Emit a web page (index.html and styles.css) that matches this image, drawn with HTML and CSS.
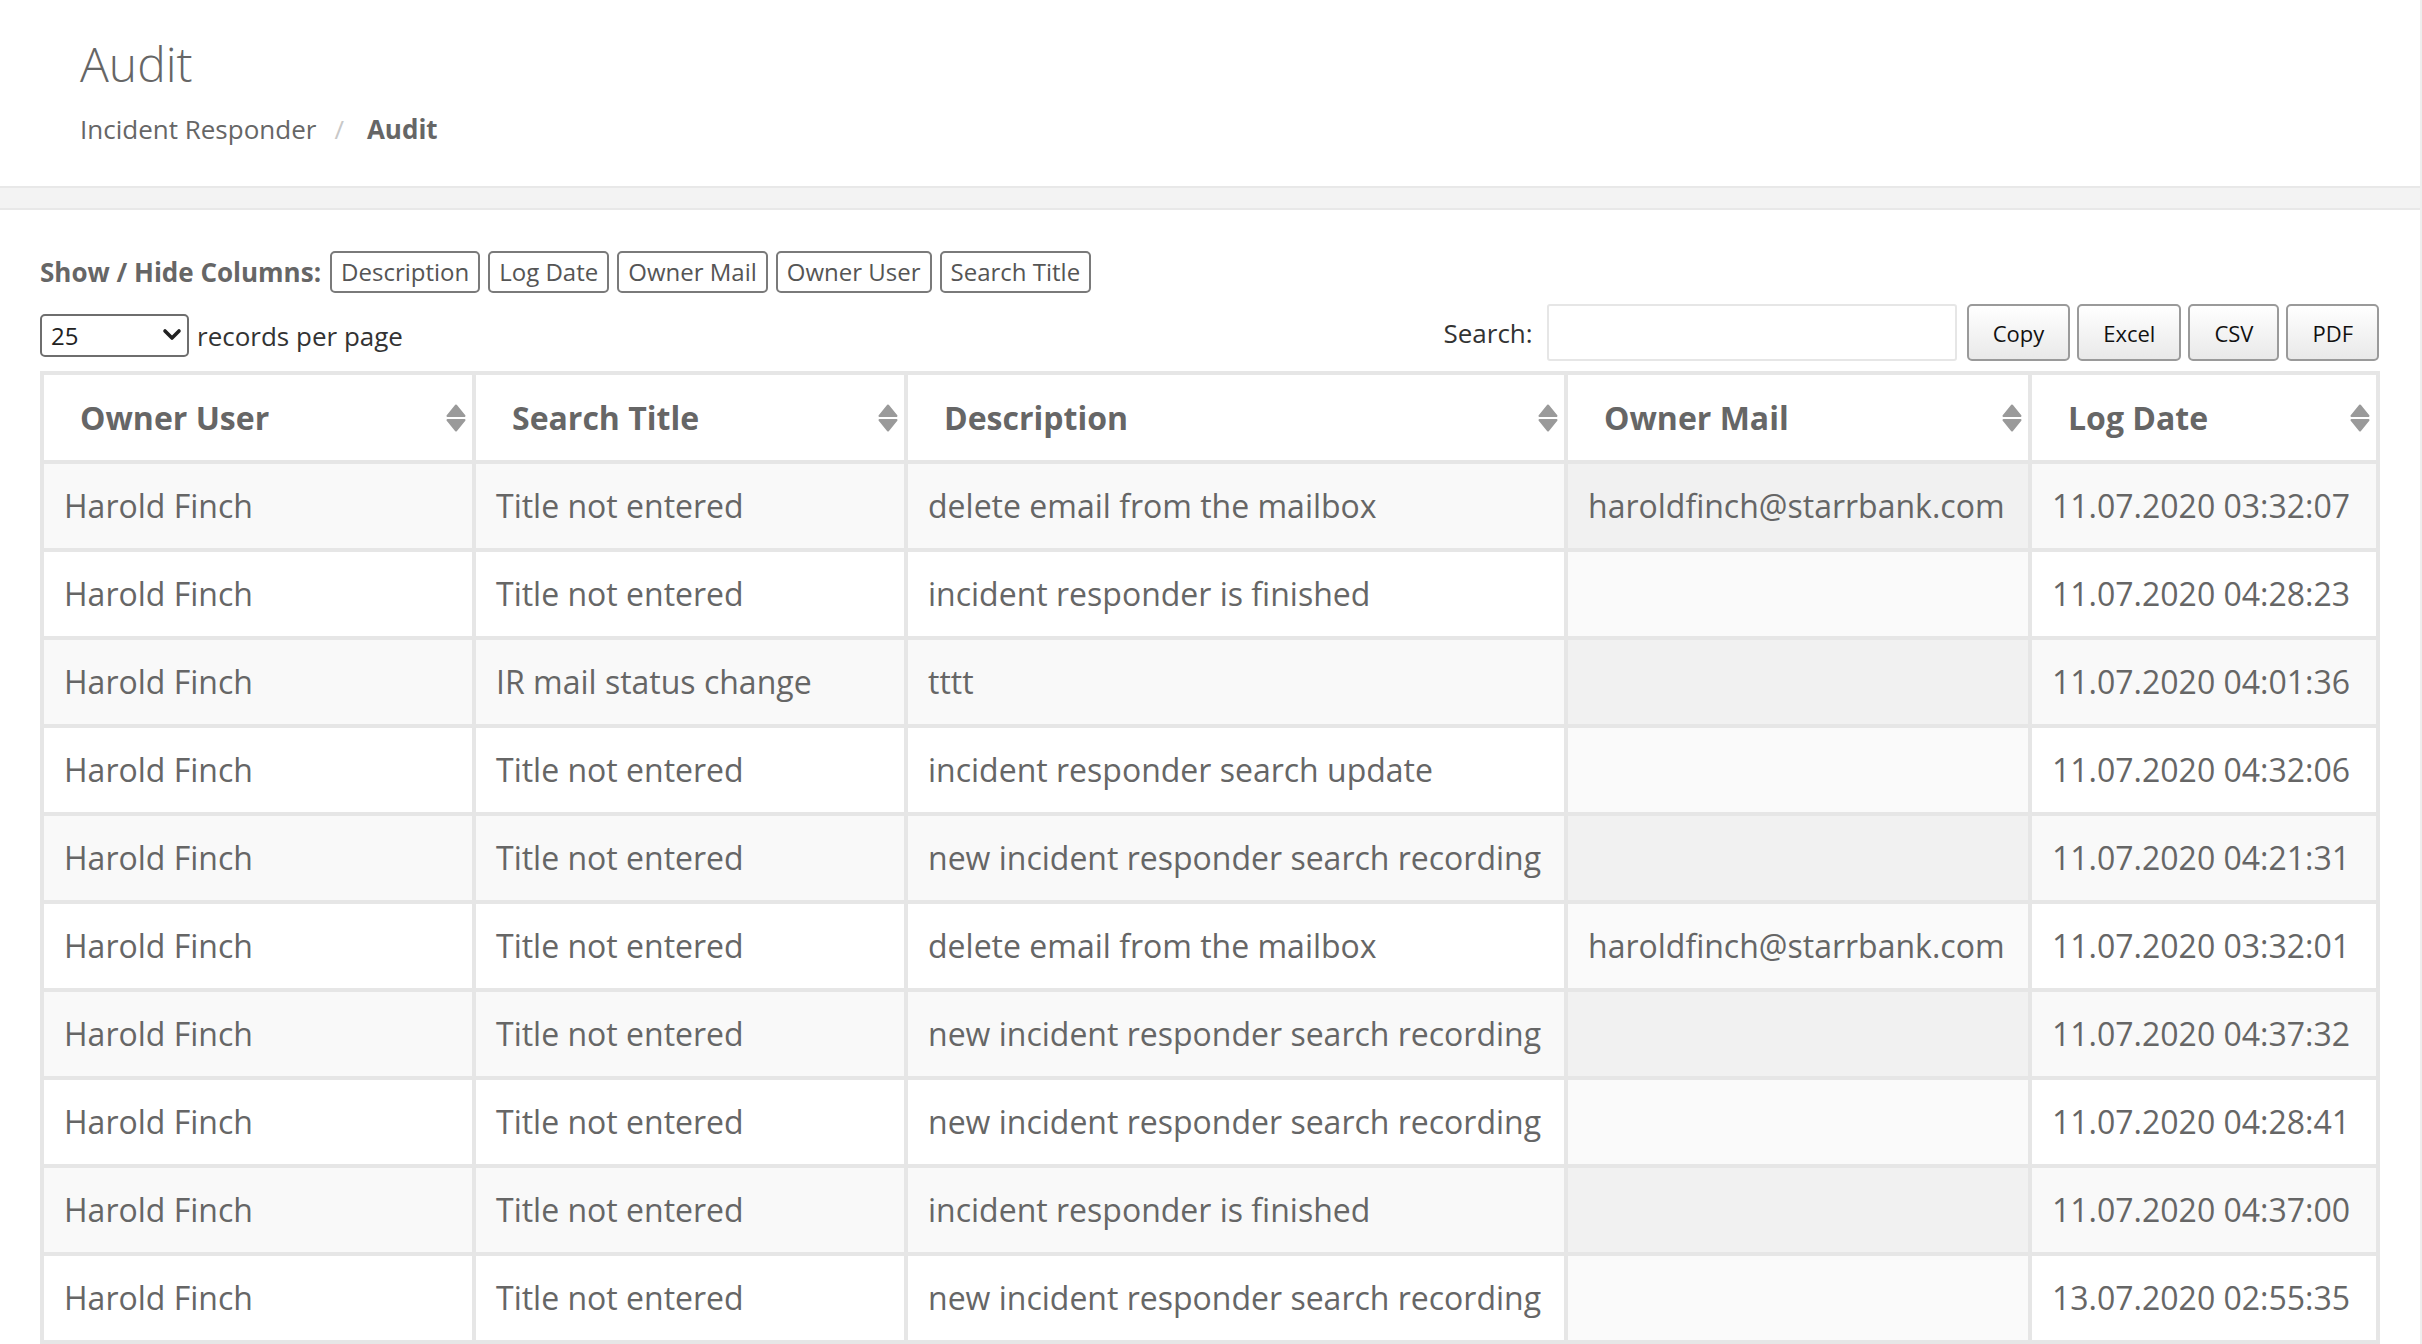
FILE: index.html
```html
<!DOCTYPE html>
<html lang="en">
<head>
<meta charset="utf-8">
<title>Audit</title>
<link rel="stylesheet" href="styles.css">
</head>
<body>
<div class="page">
  <header class="page-header">
    <h1 class="title">Audit</h1>
    <div class="breadcrumb">
      <span class="crumb">Incident Responder</span><span class="sep">/</span><span class="crumb active">Audit</span>
    </div>
  </header>
  <div class="band"></div>
  <main class="content">
    <div class="toggles">
      <span class="toggles-label">Show / Hide Columns:</span>
      <button class="toggle">Description</button>
      <button class="toggle">Log Date</button>
      <button class="toggle">Owner Mail</button>
      <button class="toggle">Owner User</button>
      <button class="toggle">Search Title</button>
    </div>
    <div class="controls">
      <div class="length">
        <div class="select-wrap">
          <select class="select"><option>25</option><option>50</option><option>100</option></select>
          <svg class="chev" width="20" height="13" viewBox="0 0 20 13"><path d="M3 3 L10 10 L17 3" fill="none" stroke="#222" stroke-width="3.6" stroke-linecap="round" stroke-linejoin="round"/></svg>
        </div>
        <span class="length-text">records per page</span>
      </div>
      <div class="right-controls">
        <label class="search-label">Search:</label>
        <input class="search-input" type="text">
        <div class="buttons">
          <button class="dt-btn">Copy</button>
          <button class="dt-btn">Excel</button>
          <button class="dt-btn">CSV</button>
          <button class="dt-btn">PDF</button>
        </div>
      </div>
    </div>
    <table class="grid">
      <colgroup>
        <col class="c1"><col class="c2"><col class="c3"><col class="c4"><col class="c5">
      </colgroup>
      <thead>
        <tr>
          <th><div class="th-in"><span>Owner User</span><svg class="sort" width="20" height="28" viewBox="0 0 20 28"><path d="M10 1.5 L18.5 12 L1.5 12 Z" fill="#9a9a9a" stroke="#9a9a9a" stroke-width="2" stroke-linejoin="round"/><path d="M1.5 16 L18.5 16 L10 26.5 Z" fill="#9a9a9a" stroke="#9a9a9a" stroke-width="2" stroke-linejoin="round"/></svg></div></th>
          <th><div class="th-in"><span>Search Title</span><svg class="sort" width="20" height="28" viewBox="0 0 20 28"><path d="M10 1.5 L18.5 12 L1.5 12 Z" fill="#9a9a9a" stroke="#9a9a9a" stroke-width="2" stroke-linejoin="round"/><path d="M1.5 16 L18.5 16 L10 26.5 Z" fill="#9a9a9a" stroke="#9a9a9a" stroke-width="2" stroke-linejoin="round"/></svg></div></th>
          <th><div class="th-in"><span>Description</span><svg class="sort" width="20" height="28" viewBox="0 0 20 28"><path d="M10 1.5 L18.5 12 L1.5 12 Z" fill="#9a9a9a" stroke="#9a9a9a" stroke-width="2" stroke-linejoin="round"/><path d="M1.5 16 L18.5 16 L10 26.5 Z" fill="#9a9a9a" stroke="#9a9a9a" stroke-width="2" stroke-linejoin="round"/></svg></div></th>
          <th><div class="th-in"><span>Owner Mail</span><svg class="sort" width="20" height="28" viewBox="0 0 20 28"><path d="M10 1.5 L18.5 12 L1.5 12 Z" fill="#9a9a9a" stroke="#9a9a9a" stroke-width="2" stroke-linejoin="round"/><path d="M1.5 16 L18.5 16 L10 26.5 Z" fill="#9a9a9a" stroke="#9a9a9a" stroke-width="2" stroke-linejoin="round"/></svg></div></th>
          <th><div class="th-in"><span>Log Date</span><svg class="sort" width="20" height="28" viewBox="0 0 20 28"><path d="M10 1.5 L18.5 12 L1.5 12 Z" fill="#9a9a9a" stroke="#9a9a9a" stroke-width="2" stroke-linejoin="round"/><path d="M1.5 16 L18.5 16 L10 26.5 Z" fill="#9a9a9a" stroke="#9a9a9a" stroke-width="2" stroke-linejoin="round"/></svg></div></th>
        </tr>
      </thead>
      <tbody>
        <tr><td>Harold Finch</td><td>Title not entered</td><td>delete email from the mailbox</td><td class="sorted">haroldfinch@starrbank.com</td><td>11.07.2020 03:32:07</td></tr>
        <tr><td>Harold Finch</td><td>Title not entered</td><td>incident responder is finished</td><td class="sorted"></td><td>11.07.2020 04:28:23</td></tr>
        <tr><td>Harold Finch</td><td>IR mail status change</td><td>tttt</td><td class="sorted"></td><td>11.07.2020 04:01:36</td></tr>
        <tr><td>Harold Finch</td><td>Title not entered</td><td>incident responder search update</td><td class="sorted"></td><td>11.07.2020 04:32:06</td></tr>
        <tr><td>Harold Finch</td><td>Title not entered</td><td>new incident responder search recording</td><td class="sorted"></td><td>11.07.2020 04:21:31</td></tr>
        <tr><td>Harold Finch</td><td>Title not entered</td><td>delete email from the mailbox</td><td class="sorted">haroldfinch@starrbank.com</td><td>11.07.2020 03:32:01</td></tr>
        <tr><td>Harold Finch</td><td>Title not entered</td><td>new incident responder search recording</td><td class="sorted"></td><td>11.07.2020 04:37:32</td></tr>
        <tr><td>Harold Finch</td><td>Title not entered</td><td>new incident responder search recording</td><td class="sorted"></td><td>11.07.2020 04:28:41</td></tr>
        <tr><td>Harold Finch</td><td>Title not entered</td><td>incident responder is finished</td><td class="sorted"></td><td>11.07.2020 04:37:00</td></tr>
        <tr><td>Harold Finch</td><td>Title not entered</td><td>new incident responder search recording</td><td class="sorted"></td><td>13.07.2020 02:55:35</td></tr>
      </tbody>
    </table>
  </main>
</div>
</body>
</html>
```

FILE: styles.css
```css
html, body {
  margin: 0;
  padding: 0;
  overflow: hidden;
  background: #fff;
}
body {
  font-family: "Open Sans", "Noto Sans", sans-serif;
  color: #666;
}
.page {
  border-right: 2px solid #eeeeee;
  min-height: 1344px;
}
.page-header {
  padding: 36px 80px 41px;
}
.title {
  margin: 0;
  font-size: 48px;
  line-height: 56px;
  font-weight: 300;
  color: #666;
}
.breadcrumb {
  margin-top: 21px;
  font-size: 26px;
  line-height: 32px;
  color: #666;
}
.sep {
  color: #c8c8c8;
  margin: 0 23px 0 18px;
}
.crumb.active {
  font-weight: 700;
  color: #666;
}
.band {
  height: 20px;
  background: #f3f3f3;
  border-top: 2px solid #e8e8e8;
  border-bottom: 2px solid #e8e8e8;
}
.content {
  padding: 41px 40px 0;
}
.toggles {
  display: flex;
  align-items: center;
  gap: 8px;
  height: 42px;
}
.toggles-label {
  font-size: 26px;
  font-weight: 700;
  color: #666;
  margin-right: 1px;
}
.toggle {
  font-family: "Open Sans", sans-serif;
  font-size: 24px;
  line-height: 34px;
  height: 42px;
  padding: 0 9px;
  color: #555;
  background: #fff;
  border: 2px solid #7a7a7a;
  border-radius: 5px;
}
.controls {
  margin-top: 11px;
  display: flex;
  justify-content: space-between;
  align-items: center;
  height: 57px;
}
.length {
  display: flex;
  align-items: center;
  margin-top: 6px;
}
.select-wrap {
  position: relative;
  width: 149px;
  height: 43px;
}
.select {
  appearance: none;
  -webkit-appearance: none;
  width: 149px;
  height: 43px;
  box-sizing: border-box;
  border: 2px solid #6e6e6e;
  border-radius: 5px;
  background: #fff;
  font-family: "Open Sans", sans-serif;
  font-size: 24px;
  color: #222;
  padding: 0 0 0 9px;
}
.chev {
  position: absolute;
  right: 7px;
  top: 14px;
  pointer-events: none;
}
.length-text {
  margin-left: 8px;
  font-size: 26px;
  color: #333;
}
.right-controls {
  display: flex;
  align-items: center;
  margin-right: 1px;
}
.search-label {
  font-size: 26px;
  color: #333;
}
.search-input {
  margin-left: 14px;
  width: 410px;
  height: 57px;
  box-sizing: border-box;
  border: 2px solid #e6e6e6;
  border-radius: 3px;
  background: #fff;
}
.buttons {
  display: flex;
  gap: 7px;
  margin-left: 10px;
}
.dt-btn {
  font-family: "Open Sans", sans-serif;
  font-size: 22px;
  color: #111;
  height: 57px;
  padding: 0 24px;
  border: 2px solid #9a9a9a;
  border-radius: 5px;
  background: linear-gradient(to bottom, #ffffff 0%, #e9e9e9 100%);
}
.grid {
  margin-top: 10px;
  width: 2340px;
  table-layout: fixed;
  border-collapse: collapse;
  font-size: 32px;
}
.c1 { width: 432px; }
.c2 { width: 432px; }
.c3 { width: 660px; }
.c4 { width: 464px; }
.c5 { width: 348px; }
.grid th, .grid td {
  border: 4px solid #e6e6e6;
}
.grid th {
  text-align: left;
  font-weight: 700;
  color: #666;
  padding: 21px 6px 20px 36px;
  line-height: 44px;
  background: #fff;
}
.th-in {
  display: flex;
  justify-content: space-between;
  align-items: center;
}
.sort {
  display: block;
}
.grid td {
  padding: 20px 20px;
  line-height: 44px;
  color: #666;
  white-space: nowrap;
  overflow: hidden;
}
.grid tbody tr:nth-child(odd) td {
  background: #f9f9f9;
}
.grid tbody tr:nth-child(even) td {
  background: #fff;
}
.grid tbody tr:nth-child(odd) td.sorted {
  background: #f1f1f1;
}
.grid tbody tr:nth-child(even) td.sorted {
  background: #fafafa;
}
```
